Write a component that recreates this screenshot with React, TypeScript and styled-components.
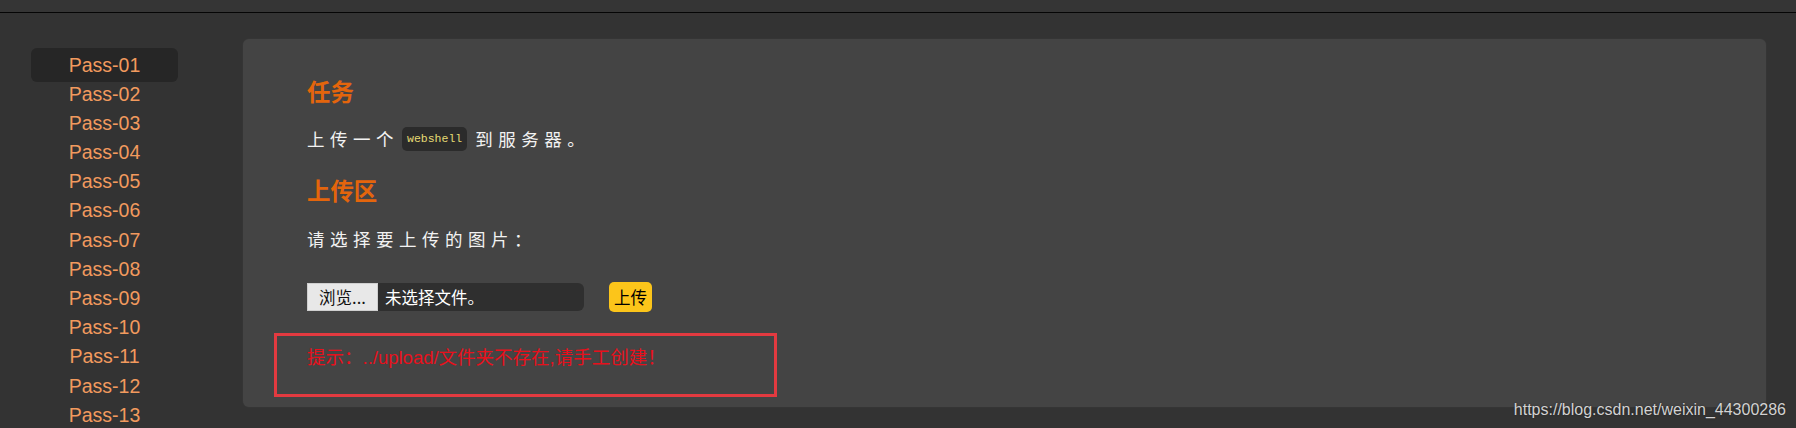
import styled, { createGlobalStyle } from 'styled-components';

const GlobalStyle = createGlobalStyle`
  html, body {
    margin: 0;
    padding: 0;
    background: #333333;
  }
  body {
    font-family: "Liberation Sans", "Noto Sans CJK SC", sans-serif;
  }
`;

const Page = styled.div`
  position: relative;
  width: 1796px;
  height: 428px;
  overflow: hidden;
  background: #333333;
`;

const TopBar = styled.div`
  height: 12px;
  background: #353535;
  border-bottom: 1px solid #050505;
`;

const Main = styled.div`
  display: flex;
  align-items: flex-start;
  padding: 26px 30px 0 31px;
`;

const Sidebar = styled.ul`
  list-style: none;
  margin: 11.5px 0 0;
  padding: 0;
  width: 147px;
  flex-shrink: 0;
`;

const NavItem = styled.li<{ $active?: boolean }>`
  height: 29.2px;
  line-height: 29.2px;
  text-align: center;
  font-family: "Liberation Sans", Arial, sans-serif;
  font-size: 19.5px;
  color: #f29a5e;
  border-radius: 6px;
  background: ${p => (p.$active ? '#262626' : 'transparent')};
  padding: ${p => (p.$active ? '2.6px 0' : '0')};
  margin: ${p => (p.$active ? '-2.6px 0' : '0')};
`;

const Panel = styled.div`
  margin-left: 65px;
  flex: 1;
  height: 368px;
  box-sizing: border-box;
  background: #444444;
  border-radius: 6px;
  box-shadow: 0 0 2px rgba(255, 255, 255, 0.06);
  padding: 38px 0 0 64px;
  font-family: "Liberation Sans", "Noto Sans CJK SC", sans-serif;
`;

const Heading = styled.h2<{ $gap: number }>`
  margin: ${p => p.$gap}px 0 0;
  font-size: 23.4px;
  line-height: 28px;
  font-weight: bold;
  color: #e4650c;
  font-family: "Noto Sans CJK SC", sans-serif;
`;

const Paragraph = styled.p<{ $gap: number }>`
  margin: ${p => p.$gap}px 0 0;
  font-size: 17.5px;
  line-height: 24px;
  letter-spacing: 5.5px;
  color: #f2f2f2;
  font-family: "Noto Sans CJK SC", sans-serif;
`;

const Code = styled.code`
  display: inline-block;
  vertical-align: middle;
  margin: -3px 8px 0 3px;
  height: 24px;
  line-height: 24px;
  padding: 0 5px;
  border-radius: 5px;
  background: #2b2b2b;
  color: #e6db74;
  font-family: "Liberation Mono", monospace;
  font-size: 11.5px;
  letter-spacing: 0;
`;

const UploadRow = styled.div`
  display: flex;
  align-items: center;
  gap: 25px;
  margin-top: 30.5px;
  height: 30px;
`;

const FileField = styled.label`
  display: flex;
  align-items: center;
  width: 277px;
  height: 28px;
  background: #2f2f2f;
  border-radius: 0 6px 6px 0;
  font-family: "Noto Sans CJK SC", sans-serif;
  font-size: 16.5px;
  color: #ffffff;
`;

const BrowseButton = styled.span`
  width: 71px;
  height: 100%;
  display: flex;
  align-items: center;
  justify-content: center;
  background: #e8e8e8;
  color: #111111;
  border: 1px solid #cfcfcf;
  box-sizing: border-box;
`;

const FileName = styled.span`
  margin-left: 7px;
`;

const SubmitButton = styled.button`
  width: 43px;
  height: 30px;
  padding: 0;
  border: none;
  border-radius: 5px;
  background: #fcc51a;
  color: #000000;
  font-family: "Noto Sans CJK SC", sans-serif;
  font-size: 16.5px;
  line-height: 30px;
`;

const ErrorBox = styled.div`
  margin: 21px 0 0 -33px;
  width: 503px;
  height: 64px;
  box-sizing: border-box;
  border: 3px solid #e33a40;
  padding: 10.5px 0 0 30px;
`;

const ErrorText = styled.div`
  font-size: 18.5px;
  line-height: 24px;
  color: #e8101c;
  font-family: "Liberation Sans", "Noto Sans CJK SC", sans-serif;
`;

const Watermark = styled.div`
  position: absolute;
  right: 10px;
  bottom: 9px;
  font-family: "Liberation Sans", Arial, sans-serif;
  font-size: 16px;
  color: #d2d2d2;
  text-shadow: 0 0 2px rgba(0, 0, 0, 0.4);
`;

const passes = Array.from({ length: 13 }, (_, i) => `Pass-${String(i + 1).padStart(2, '0')}`);

export default function App() {
  return (
    <Page>
      <GlobalStyle />
      <TopBar />
      <Main>
        <Sidebar>
          {passes.map((name, index) => (
            <NavItem key={name} $active={index === 0}>
              {name}
            </NavItem>
          ))}
        </Sidebar>
        <Panel>
          <Heading $gap={0}>任务</Heading>
          <Paragraph $gap={21.5}>
            上传一个<Code>webshell</Code>到服务器。
          </Paragraph>
          <Heading $gap={24.5}>上传区</Heading>
          <Paragraph $gap={23.5}>请选择要上传的图片：</Paragraph>
          <UploadRow>
            <FileField>
              <BrowseButton>浏览...</BrowseButton>
              <FileName>未选择文件。</FileName>
            </FileField>
            <SubmitButton>上传</SubmitButton>
          </UploadRow>
          <ErrorBox>
            <ErrorText>提示：../upload/文件夹不存在,请手工创建！</ErrorText>
          </ErrorBox>
        </Panel>
      </Main>
      <Watermark>https://blog.csdn.net/weixin_44300286</Watermark>
    </Page>
  );
}
